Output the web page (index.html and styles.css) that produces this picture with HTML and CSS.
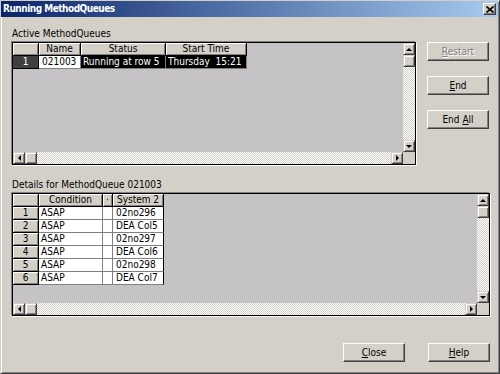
FILE: index.html
```html
<!DOCTYPE html>
<html lang="en">
<head>
  <meta charset="UTF-8" />
  <title>Running MethodQueues</title>
  <link rel="stylesheet" href="styles.css">
</head>
<body>

  <div class="window" role="dialog" aria-label="Running MethodQueues">
    <div class="titlebar">
      <span class="title">Running MethodQueues</span>
      <span class="close-btn" aria-label="Close">
        <svg width="8" height="7" viewBox="0 0 8 7"><path d="M0.5 0.5 L7.5 6.5 M7.5 0.5 L0.5 6.5" stroke="#000" stroke-width="1.6" fill="none"/></svg>
      </span>
    </div>

    <div class="content">
      <div class="label">Active MethodQueues</div>
      <div class="top-row">
        <div class="grid grid-top">
          <div class="grid-view">
            <table class="sheet">
              <tr>
                <th class="w-row"></th>
                <th class="w-name">Name</th>
                <th class="w-status">Status</th>
                <th class="w-time">Start Time</th>
              </tr>
              <tr class="selected">
                <th class="row-head">1</th>
                <td class="focus">021003</td>
                <td>Running at row 5</td>
                <td>Thursday&nbsp; 15:21</td>
              </tr>
            </table>
          </div>
          <div class="vscroll">
            <span class="sb-btn"><i class="arrow up"></i></span>
            <span class="sb-btn"></span>
            <span class="track"></span>
            <span class="sb-btn"><i class="arrow down"></i></span>
          </div>
          <div class="hscroll">
            <span class="sb-btn"><i class="arrow left"></i></span>
            <span class="sb-btn"></span>
            <span class="track"></span>
            <span class="sb-btn"><i class="arrow right"></i></span>
          </div>
          <div class="corner"></div>
        </div>

        <div class="side-buttons">
          <button class="btn" disabled><u>R</u>estart</button>
          <button class="btn"><u>E</u>nd</button>
          <button class="btn">End <u>A</u>ll</button>
        </div>
      </div>

      <div class="label label-details">Details for MethodQueue 021003</div>
      <div class="grid grid-bottom">
        <div class="grid-view">
          <table class="sheet">
            <tr>
              <th class="w-row"></th>
              <th class="w-cond">Condition</th>
              <th class="w-dot">&middot;</th>
              <th class="w-sys">System 2</th>
            </tr>
            <tr><th class="row-head">1</th><td>ASAP</td><td></td><td class="sys">02no296</td></tr>
            <tr><th class="row-head">2</th><td>ASAP</td><td></td><td class="sys">DEA Col5</td></tr>
            <tr><th class="row-head">3</th><td>ASAP</td><td></td><td class="sys">02no297</td></tr>
            <tr><th class="row-head">4</th><td>ASAP</td><td></td><td class="sys">DEA Col6</td></tr>
            <tr><th class="row-head">5</th><td>ASAP</td><td></td><td class="sys">02no298</td></tr>
            <tr><th class="row-head">6</th><td>ASAP</td><td></td><td class="sys">DEA Col7</td></tr>
          </table>
        </div>
        <div class="vscroll">
          <span class="sb-btn"><i class="arrow up"></i></span>
          <span class="sb-btn"></span>
          <span class="track"></span>
          <span class="sb-btn"><i class="arrow down"></i></span>
        </div>
        <div class="hscroll">
          <span class="sb-btn"><i class="arrow left"></i></span>
          <span class="sb-btn"></span>
          <span class="track"></span>
          <span class="sb-btn"><i class="arrow right"></i></span>
        </div>
        <div class="corner"></div>
      </div>

      <div class="footer">
        <button class="btn"><u>C</u>lose</button>
        <button class="btn"><u>H</u>elp</button>
      </div>
    </div>
  </div>

</body>
</html>
```

FILE: styles.css
```css
/* Win2000 style dialog */
* {
  box-sizing: border-box;
  margin: 0;
  padding: 0;
}

body {
  width: 500px;
  height: 374px;
  overflow: hidden;
  background: #d4d0c8;
  font-family: "DejaVu Sans Condensed", "Liberation Sans", sans-serif;
  font-size: 10px;
  color: #000;
}

.window {
  width: 500px;
  height: 374px;
  display: flex;
  flex-direction: column;
  background: #d4d0c8;
  border: 1px solid;
  border-color: #d4d0c8 #404040 #404040 #d4d0c8;
  box-shadow: inset 1px 1px #fff, inset -1px -1px #808080;
}

.titlebar {
  height: 16px;
  display: flex;
  align-items: center;
  justify-content: space-between;
  padding: 0 2px;
  margin-right: 1px;
  background: linear-gradient(to right, #0a246a, #a6caf0);
}

.title {
  color: #fff;
  font-weight: bold;
  letter-spacing: -0.5px;
  line-height: 14px;
}

.close-btn {
  width: 13px;
  height: 12px;
  display: flex;
  align-items: center;
  justify-content: center;
  background: #d4d0c8;
  border: 1px solid;
  border-color: #fff #404040 #404040 #fff;
  box-shadow: inset -1px -1px #808080;
}

.content {
  flex: 1;
  padding: 10px 9px 0 11px;
}

.label {
  height: 13px;
  line-height: 13px;
  margin-bottom: 2px;
}

.label-details {
  margin-top: 13px;
}

.top-row {
  display: flex;
  gap: 11px;
  height: 123px;
}

/* grid with scrollbars */
.grid {
  display: grid;
  grid-template-columns: 1fr 12px;
  grid-template-rows: 1fr 12px;
  border: 1px solid #000;
  box-shadow: -1px -1px 0 #808080, 1px 1px 0 #fff;
  background: #c6c3c6;
}

.grid-top {
  width: 404px;
}

.grid-bottom {
  height: 123px;
}

.grid-view {
  overflow: hidden;
}

.vscroll {
  display: flex;
  flex-direction: column;
}

.hscroll {
  display: flex;
}

.corner {
  background: #d4d0c8;
}

.track {
  flex: 1;
  background: repeating-conic-gradient(#fff 0 25%, #d4d0c8 0 50%) 0 0 / 2px 2px;
}

.sb-btn {
  width: 12px;
  height: 12px;
  flex: none;
  display: flex;
  align-items: center;
  justify-content: center;
  background: #d4d0c8;
  border: 1px solid;
  border-color: #d4d0c8 #404040 #404040 #d4d0c8;
  box-shadow: inset 1px 1px #fff, inset -1px -1px #808080;
}

.arrow {
  width: 0;
  height: 0;
  border: 3px solid transparent;
}

.arrow.up {
  border-top: 0;
  border-bottom-color: #000;
}

.arrow.down {
  border-bottom: 0;
  border-top-color: #000;
}

.arrow.left {
  border-left: 0;
  border-right-color: #000;
}

.arrow.right {
  border-right: 0;
  border-left-color: #000;
}

/* table */
.sheet {
  border-collapse: separate;
  border-spacing: 0;
  table-layout: fixed;
}

.sheet th,
.sheet td {
  height: 13px;
  line-height: 12px;
  padding: 0 2px;
  white-space: nowrap;
  overflow: hidden;
  font-weight: normal;
  text-align: left;
}

.sheet th {
  text-align: center;
  background: #d4d0c8;
  border-right: 1px solid #000;
  border-bottom: 1px solid #000;
  box-shadow: inset 1px 1px #fff, inset -1px -1px #808080;
}

.sheet td {
  background: #fff;
  border-right: 1px solid #808080;
  border-bottom: 1px solid #808080;
}

.sheet td.sys {
  padding-left: 3px;
  border-right-color: #000;
}

.w-row { width: 26px; }
.w-name { width: 42px; }
.w-status { width: 85px; }
.w-time { width: 81px; }
.w-cond { width: 64px; }
.w-dot { width: 10px; }
.w-sys { width: 51px; }

.selected th.row-head {
  background: #404040;
  color: #fff;
  box-shadow: none;
}

.selected td {
  background: #000;
  color: #fff;
}

.selected td.focus {
  background: #fff;
  color: #000;
  padding-left: 3px;
}

/* buttons */
.side-buttons {
  width: 62px;
  display: flex;
  flex-direction: column;
  gap: 15px;
}

.btn {
  width: 62px;
  height: 19px;
  font-family: inherit;
  font-size: 10px;
  color: #000;
  background: #d4d0c8;
  border: 1px solid;
  border-color: #fff #404040 #404040 #fff;
  box-shadow: inset -1px -1px #808080;
}

.btn:disabled {
  color: #808080;
  text-shadow: 1px 1px #fff;
}

.footer {
  display: flex;
  justify-content: flex-end;
  gap: 23px;
  margin-top: 27px;
}
```
